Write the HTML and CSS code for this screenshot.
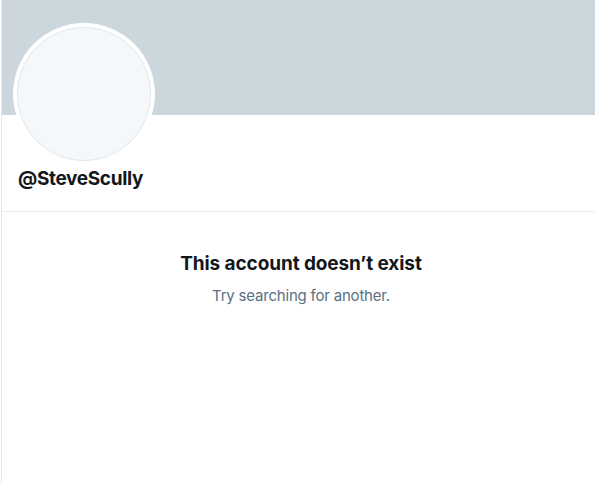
FILE: index.html
```html
<!DOCTYPE html>
<html lang="en">
<head>
<meta charset="utf-8">
<title>@SteveScully</title>
<link rel="stylesheet" href="styles.css">
</head>
<body>
<main class="column">
  <header class="profile">
    <div class="banner"></div>
    <div class="profile-info">
      <div class="avatar"><div class="avatar-inner"></div></div>
      <h2 class="handle">@SteveScully</h2>
    </div>
  </header>
  <section class="empty">
    <h1 class="empty-title">This account doesn’t exist</h1>
    <p class="empty-text">Try searching for another.</p>
  </section>
</main>
</body>
</html>
```

FILE: styles.css
```css
* { box-sizing: border-box; }
html, body { margin: 0; padding: 0; background: #fff; overflow: hidden; }
body {
  font-family: Inter, "Noto Sans", "Liberation Sans", sans-serif;
  color: #0f1419;
}
.column {
  width: 600px;
  margin-left: 1px;
  border-left: 1px solid #e6e9ec;
  border-right: 1px solid #e6e9ec;
  min-height: 484px;
}
.banner {
  height: 115px;
  background: #ccd6dd;
}
.profile {
  border-bottom: 1px solid #e6ecf0;
}
.profile-info {
  padding: 0 11px 20px 11px;
}
.avatar {
  width: 142px;
  height: 142px;
  margin-top: -92px;
  border-radius: 50%;
  background: #fff;
  padding: 4px;
}
.avatar-inner {
  width: 100%;
  height: 100%;
  border-radius: 50%;
  background: #f5f8fa;
  border: 1px solid #e1e8ed;
}
.handle {
  margin: 2px 0 0 5px;
  font-size: 19px;
  line-height: 24px;
  font-weight: 700;
  color: #14171a;
  letter-spacing: -0.35px;
}
.empty {
  display: flex;
  flex-direction: column;
  align-items: center;
  padding-top: 40px;
}
.empty-title {
  margin: 0;
  font-size: 19px;
  line-height: 24px;
  font-weight: 700;
  color: #14171a;
  letter-spacing: -0.1px;
}
.empty-text {
  margin: 10px 0 0 0;
  font-size: 15px;
  line-height: 20px;
  color: #5b7083;
  letter-spacing: -0.2px;
}
```
